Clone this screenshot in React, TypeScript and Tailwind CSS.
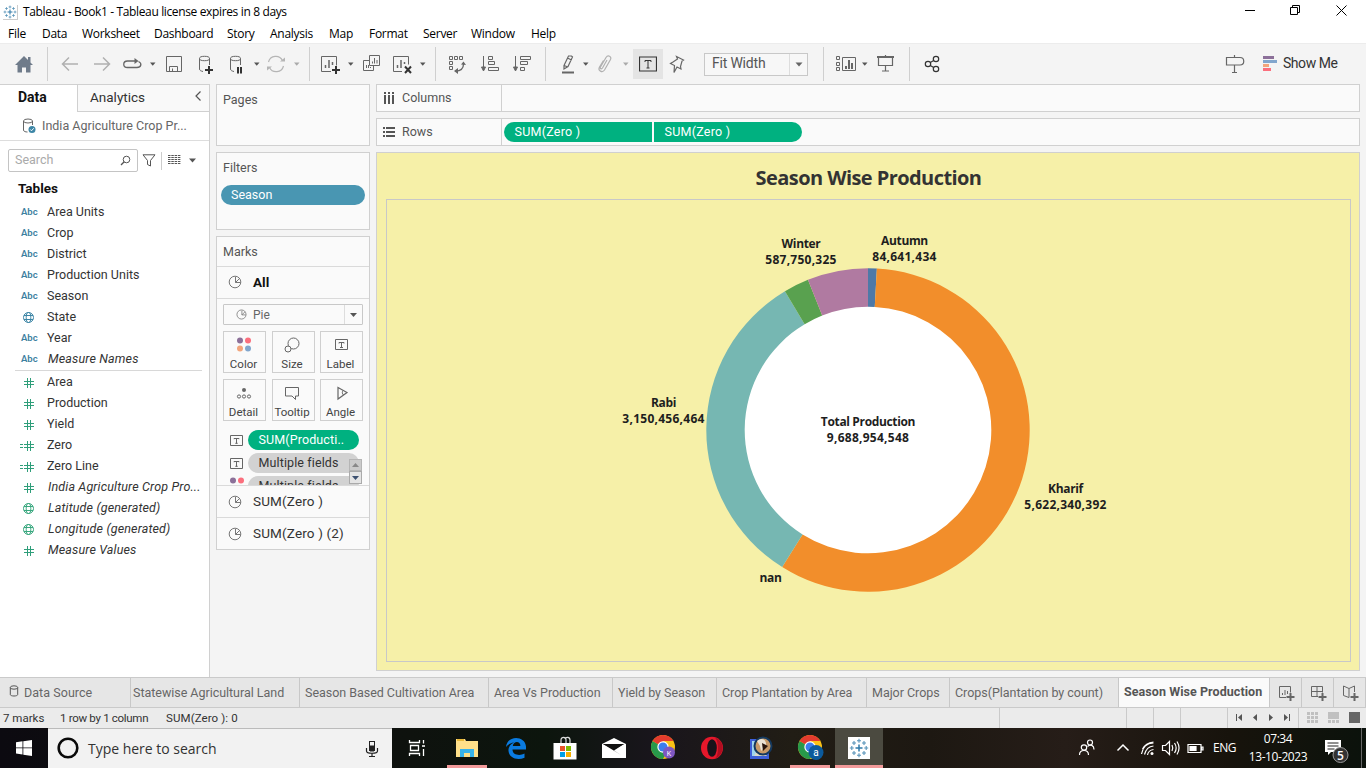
import React from "react";

type P = { children?: React.ReactNode; className?: string };

const Ic = ({ s = 24, className = "", children }: P & { s?: number }) => (
  <svg width={s} height={s} viewBox={`0 0 ${s} ${s}`} fill="none" stroke="#666" strokeWidth="1" className={"block shrink-0 " + className}>
    {children}
  </svg>
);

const Caret = ({ className = "", color = "#555" }: { className?: string; color?: string }) => (
  <svg width="8" height="6" viewBox="0 0 8 6" className={"shrink-0 " + className}>
    <path d="M2 1.500h5.500L4.750 4.700z" fill={color} />
  </svg>
);

const Sep = ({ className = "" }: P) => <div className={"h-[34px] w-px shrink-0 bg-[#cfcfcf] " + className} />;

const Plus = ({ x, y }: { x: number; y: number }) => (
  <path d={`M${x - 4} ${y}h8M${x} ${y - 4}v8`} stroke="#333" strokeWidth="2" />
);

const PieIcon = ({ s = 14 }: { s?: number }) => (
  <svg width={s} height={s} viewBox="0 0 14 14" fill="none" stroke="#777" strokeWidth="1" className="shrink-0">
    <circle cx="7" cy="7" r="5.800" />
    <path d="M7.500 2v5.500h5M7.500 7.500l4-4" />
  </svg>
);

const Globe = ({ color }: { color: string }) => (
  <svg width="13" height="13" viewBox="0 0 13 13" fill="none" stroke={color} className="shrink-0">
    <circle cx="6.500" cy="6.500" r="5" />
    <ellipse cx="6.500" cy="6.500" rx="2.300" ry="5" />
    <path d="M2 4.500h9M2 8.500h9" />
  </svg>
);

const Hash = ({ calc }: { calc?: boolean }) => (
  <svg width="20" height="12" viewBox="0 0 20 12" fill="none" stroke="#2f9e7a" className="shrink-0">
    <path d="M9.500 1v10M12.500 1v10M6 4.500h10M6 7.500h10" />
    {calc && <path d="M2 4.500h3M2 7.500h3" />}
  </svg>
);

const TBox = ({ s = 13 }: { s?: number }) => (
  <svg width={s} height={s} viewBox="0 0 13 13" fill="none" stroke="#666" className="shrink-0">
    <path d="M.5 1.500h12v10H.5zM4 5.200V4.500h5v.700M6.500 4.500v5M5.300 9.300h2.400" />
  </svg>
);

const TableauMark = ({ s = 14 }: { s?: number }) => (
  <svg width={s} height={s} viewBox="0 0 20 20" fill="none" stroke="#2e79a8" strokeWidth="1.500" className="shrink-0">
    <path d="M10 6.500v7M6.500 10h7" />
    <path d="M10 .800v4M8 2.800h4M10 15.200v4M8 17.200h4M.800 10h4M2.800 8v4M15.200 10h4M17.200 8v4M5 3v4M3 5h4M15 3v4M13 5h4M5 13v4M3 15h4M15 13v4M13 15h4" strokeWidth="1.100" stroke="#5793b8" />
  </svg>
);

const menus: [string, string][] = [
  ["File", "w-[34px]"], ["Data", "w-[40px]"], ["Worksheet", "w-[72px]"], ["Dashboard", "w-[73px]"], ["Story", "w-[43px]"],
  ["Analysis", "w-[59px]"], ["Map", "w-[40px]"], ["Format", "w-[54px]"], ["Server", "w-[48px]"], ["Window", "w-[60px]"], ["Help", "w-[30px]"],
];

const TitleBar = () => (
  <div className="flex h-6 shrink-0 items-center bg-white pl-[3px]">
    <div className="flex h-[15px] w-[15px] items-center justify-center border-r border-b border-[#ccc]"><TableauMark s={14} /></div>
    <div className="ml-[5px] font-['Open_Sans',sans-serif] text-[12px] tracking-[-0.36px] text-black">Tableau - Book1 - Tableau license expires in 8 days</div>
    <svg width="116" height="24" viewBox="0 0 116 24" fill="none" stroke="#000" className="mr-[13px] ml-auto">
      <path d="M8 10.500h10M53.500 7.500h7v7h-7zM55.500 7.500v-2h7v7h-2M99.500 5.500l10 10M109.500 5.500l-10 10" />
    </svg>
  </div>
);

const MenuBar = () => (
  <div className="flex h-[19px] shrink-0 items-center bg-white pl-2 font-['Open_Sans',sans-serif] text-[12px] tracking-[-0.28px] text-black">
    {menus.map(([t, w]) => <div key={t} className={"shrink-0 whitespace-nowrap " + w}>{t}</div>)}
  </div>
);

const Toolbar = () => (
  <div className="flex h-[41px] shrink-0 items-center border-t border-[#ececec] bg-[#f4f4f4] pl-3">
    <Ic><path d="M3 13L12 4l4 4V5h2.500v5.500L21 13h-2.500v7.500h-4.500v-5h-4v5H5.500V13z" fill="#6f7b8a" stroke="none" /></Ic>
    <Sep className="ml-[11px]" />
    <Ic className="ml-[10px]"><path d="M4 12h16M11 5.500L4.500 12l6.500 6.500" stroke="#b0b0b0" strokeWidth="1.500" /></Ic>
    <Ic className="ml-2"><path d="M4 12h16M13 5.500l6.500 6.500-6.500 6.500" stroke="#b0b0b0" strokeWidth="1.500" /></Ic>
    <Ic className="ml-1.5"><path d="M18.500 9.500c4 2 2.500 6-1.500 6H7.500c-5 0-5-6.500 0-6.500H16" strokeWidth="1.300" /><path d="M14.500 6l4 3-4 3z" fill="#666" stroke="none" /></Ic>
    <Caret className="ml-1" />
    <Ic className="ml-1.5"><path d="M4.500 4.500h15v15h-15zM7.500 19.500v-5h8v5M10.500 19v-2.500" /></Ic>
    <Ic className="ml-2"><ellipse cx="10.500" cy="6.500" rx="5" ry="2.200" /><path d="M5.500 6.500v10.500c0 1.500 1.500 2 3.500 2.500M15.500 6.500v6.500" /><Plus x={15} y={18} /></Ic>
    <Ic className="ml-[7px]"><ellipse cx="10.500" cy="6.500" rx="5" ry="2.200" /><path d="M5.500 6.500v10.500c0 1.500 1.500 2 3.500 2.500M15.500 6.500v6.500" /><path d="M13 15v6.500M16 15v6.500" stroke="#333" strokeWidth="2" /></Ic>
    <Caret className="ml-[3px]" />
    <Ic className="ml-1"><path d="M4.500 10a7.500 7.500 0 0 1 14-1.500M19.500 14a7.500 7.500 0 0 1-14 1.500" stroke="#b5b5b5" strokeWidth="1.200" /><path d="M16 9.500h5V5.500zM8 14.500H3v4z" fill="#b5b5b5" stroke="none" /></Ic>
    <Caret className="ml-1" color="#aaa" />
    <Sep className="ml-[9px]" />
    <Ic className="ml-2"><path d="M13 19.500H3.500v-15h15v9" /><path d="M7.500 16v-3M11 16V8M14.500 13v-3" strokeWidth="1.500" /><Plus x={18} y={18} /></Ic>
    <Caret className="ml-1" />
    <Ic className="ml-[5px]"><path d="M10.500 3.500h10v10h-10zM10.500 8.500h-6v10h10v-5M13.500 11.500v-2M15.500 11.500V6M18 11.500V8M7.500 16v-3M9.500 16v-3M11.500 16v-1" /></Ic>
    <Ic className="ml-2"><path d="M11 19.500H2.500v-15h15v8" /><path d="M6.500 16v-3M10 16V8M13.500 12v-2" strokeWidth="1.500" /><path d="M14 14.500l6 6.500M20 14.500l-6 6.500" stroke="#333" strokeWidth="2" /></Ic>
    <Caret className="ml-[3px]" />
    <Sep className="ml-[9px]" />
    <Ic className="ml-[9px]"><path d="M4.500 4.500h3v3h-3zM9.500 4.500h3v3h-3zM14.500 4.500h3v3h-3zM4.500 9.500h3v3h-3zM4.500 14.500h3v3h-3z" /><path d="M18.500 12c0 4-2 7-8 7" strokeWidth="1.300" /><path d="M16 12.500l2.500-3 2.500 3.500zM13 16v6l-4-3z" fill="#666" stroke="none" /></Ic>
    <Ic className="ml-[9px]"><path d="M5.500 4v14" /><path d="M3.500 15l2 4 2-4z" fill="#666" /><path d="M10.500 4.500h4v3h-4zM10.500 9.500h6v3h-6zM10.500 15.500h10v3h-10z" /></Ic>
    <Ic className="ml-2"><path d="M5.500 4v14" /><path d="M3.500 15l2 4 2-4z" fill="#666" /><path d="M10.500 4.500h10v3h-10zM10.500 9.500h7v3h-7zM10.500 15.500h4v3h-4z" /></Ic>
    <Sep className="ml-[11px]" />
    <Ic className="ml-[10px]"><path d="M8 13.500l4.500-9.500h3l1 1-4.500 9.500-4 2.500zM8 13.500l4 1.500M11.500 6l4 2" strokeWidth="1.200" /><path d="M6 20.500h12" strokeWidth="2" /></Ic>
    <Caret className="ml-px" />
    <Ic className="ml-1"><path d="M14 8l-4.500 8c-1 1.500-3 .500-2-1l5.500-9.500c2-3 6-1 4.500 2l-6 10.500c-2 3-7 1-5-3l4-6.500" stroke="#b0b0b0" strokeWidth="1.200" /></Ic>
    <Caret className="ml-1" color="#aaa" />
    <div className="ml-1 flex h-[30px] w-[30px] shrink-0 items-center justify-center bg-[#e4e4e4]">
      <Ic s={18}><path d="M.500 2h17v14H.500z" stroke="#333" strokeWidth="1.200" /><path d="M6 7V5.500h6V7M9 5.500v7.500M7.500 13h3" stroke="#333" /></Ic>
    </div>
    <Ic className="ml-0.5"><path d="M11.500 4.500l7 3.500-1.500 1-1.500 5.500.500 2.500-4-2-3 5.500.500-7-4-2 2.500-1.500L12.500 7z" strokeWidth="1.200" /></Ic>
    <div className="ml-[15px] flex h-[23px] w-[104px] shrink-0 items-center border border-[#c8c8c8] bg-[#f7f7f7]">
      <div className="w-[84px] pb-px pl-[7px] text-[14px] tracking-[-0.2px] text-[#555]">Fit Width</div>
      <div className="flex h-full flex-1 items-center justify-center border-l border-[#ddd]"><svg width="8" height="5" viewBox="0 0 8 5"><path d="M.500.500h7L4 4.500z" fill="#666" /></svg></div>
    </div>
    <Sep className="ml-[15px]" />
    <Ic className="ml-[10px]"><path d="M2.500 4.500h3v3h-3zM2.500 10.500h3v3h-3zM2.500 15.500h3v3h-3zM8.500 5.500h13v13h-13z" /><path d="M12 17v-3M15 17V8M18 17v-6" strokeWidth="2" /></Ic>
    <Caret className="ml-0.5" />
    <Ic className="ml-1.5"><path d="M3 5h17" strokeWidth="2" /><path d="M4.500 5v8.500h14V5M11.500 3v2M11.500 13.500v5.500M8 19h7" strokeWidth="1.200" /></Ic>
    <Sep className="ml-[11px]" />
    <Ic className="ml-[10px]"><g stroke="#333" strokeWidth="1.200"><circle cx="8" cy="12" r="2.700" /><circle cx="16" cy="7" r="2.700" /><circle cx="16" cy="17" r="2.700" /><path d="M10.300 10.500L13.700 8.500M10.300 13.500l3.400 2" /></g></Ic>
    <Ic className="ml-auto"><path d="M3.500 5.500h13.500c5 0 5 7.500 0 7.500H3.500zM11.500 3v2.500M11.500 13v7.500M9 20.500h5" strokeWidth="1.200" /></Ic>
    <div className="ml-4 flex h-4 w-[14px] shrink-0 flex-col gap-px">
      <div className="h-[3px] w-[11px] bg-[#8c7099]" />
      <div className="h-[3px] w-[14px] bg-[#82a6cd]" />
      <div className="h-[3px] w-[6px] bg-[#f2a57c]" />
      <div className="h-[3px] w-[8px] bg-[#fb6f7d]" />
    </div>
    <div className="mr-[25px] ml-1.5 w-[58px] shrink-0 pb-0.5 text-[14px] tracking-[-0.45px] whitespace-nowrap text-[#333]">Show Me</div>
  </div>
);

type F = { t: string; k: "abc" | "globe" | "ggreen" | "hash" | "calc"; i?: boolean };
const dims: F[] = [
  { t: "Area Units", k: "abc" }, { t: "Crop", k: "abc" }, { t: "District", k: "abc" }, { t: "Production Units", k: "abc" },
  { t: "Season", k: "abc" }, { t: "State", k: "globe" }, { t: "Year", k: "abc" }, { t: "Measure Names", k: "abc", i: true },
];
const meas: F[] = [
  { t: "Area", k: "hash" }, { t: "Production", k: "hash" }, { t: "Yield", k: "hash" }, { t: "Zero", k: "calc" }, { t: "Zero Line", k: "calc" },
  { t: "India Agriculture Crop Pro...", k: "hash", i: true }, { t: "Latitude (generated)", k: "ggreen", i: true },
  { t: "Longitude (generated)", k: "ggreen", i: true }, { t: "Measure Values", k: "hash", i: true },
];

const Field = ({ f }: { f: F }) => (
  <div className="flex h-[21px] items-center pl-[18px]">
    <div className="flex w-[29px] shrink-0 items-center">
      {f.k === "abc" && <span className="pl-[3px] text-[9.500px] font-semibold text-[#3d7f9f]">Abc</span>}
      {f.k === "globe" && <div className="pl-1"><Globe color="#3d86a6" /></div>}
      {f.k === "ggreen" && <div className="pl-1"><Globe color="#3aa87f" /></div>}
      {f.k === "hash" && <Hash />}
      {f.k === "calc" && <Hash calc />}
    </div>
    <div className={"text-[12.5px] whitespace-nowrap text-[#333] " + (f.i ? "pl-px tracking-[0.15px] italic" : "")}>{f.t}</div>
  </div>
);

const DataPane = () => (
  <div className="flex w-[210px] shrink-0 flex-col border-t border-r border-[#d0d0d0] bg-white">
    <div className="flex h-[27px] shrink-0">
      <div className="w-[77px] pt-0.5 pl-[18px] text-[14px] leading-[20px] font-bold text-[#111]">Data</div>
      <div className="flex flex-1 items-start justify-between border-b border-l border-[#d0d0d0] bg-[#f9f9f9] pt-0.5 pl-3 text-[13.5px] leading-[20px] text-[#333]">
        Analytics
        <svg width="8" height="10" viewBox="0 0 8 10" className="mt-1 mr-[7px]" fill="none" stroke="#555"><path d="M6.500.500L2 5l4.500 4.500" strokeWidth="1.200" /></svg>
      </div>
    </div>
    <div className="flex h-[29px] shrink-0 items-center border-b border-[#ddd] pl-[22px] text-[12.5px] text-[#666]">
      <svg width="14" height="16" viewBox="0 0 14 16" fill="none" stroke="#666" className="mr-1.5 shrink-0">
        <ellipse cx="6" cy="3" rx="4.500" ry="2" /><path d="M1.500 3v9c0 1.500 2 2 4 2M10.500 3v4" />
        <circle cx="10" cy="11.500" r="3.500" fill="#3d86a6" stroke="none" /><path d="M8.300 11.500l1.200 1.300 2.200-2.500" stroke="#fff" />
      </svg>
      <span className="whitespace-nowrap">India Agriculture Crop Pr...</span>
    </div>
    <div className="mt-2 flex h-[23px] shrink-0 items-center pl-2">
      <div className="flex h-[23px] w-[130px] items-center justify-between rounded-[2px] border border-[#c4c4c4] pr-[6px] pl-1.5 text-[12.5px] text-[#aaa]">
        Search
        <svg width="11" height="11" viewBox="0 0 11 11" fill="none" stroke="#555"><circle cx="6.500" cy="4.500" r="3.300" /><path d="M4.200 6.800L1 10" strokeWidth="1.300" /></svg>
      </div>
      <svg width="14" height="13" viewBox="0 0 14 13" fill="none" stroke="#555" className="ml-1"><path d="M1 .800h12L8.500 6.500v5.500l-3-1.500v-4z" /></svg>
      <div className="ml-[5px] h-[18px] w-px bg-[#ccc]" />
      <svg width="13" height="11" viewBox="0 0 13 11" className="ml-1.5" stroke="#555" strokeDasharray="2.500 .800"><path d="M0 .500h12.500M0 2.500h12.500M0 4.500h12.500M0 6.500h12.500M0 8.500h12.500" /></svg>
      <svg width="7" height="5" viewBox="0 0 7 5" className="ml-2"><path d="M0 .500h7L3.500 4.500z" fill="#555" /></svg>
    </div>
    <div className="mt-[6px] h-6 shrink-0 pl-[18px] text-[13.5px] leading-[20px] font-bold text-[#111]">Tables</div>
    <div className="flex shrink-0 flex-col">{dims.map((f) => <Field key={f.t} f={f} />)}</div>
    <div className="mr-[7px] mb-px ml-[15px] h-px shrink-0 bg-[#d8d8d8]" />
    <div className="flex shrink-0 flex-col">{meas.map((f) => <Field key={f.t} f={f} />)}</div>
  </div>
);

const MarkBtn = ({ t, children }: P & { t: string }) => (
  <div className="flex h-[42px] w-[43px] flex-col items-center justify-between border border-[#cfcfcf] bg-[#fafafa] pt-1 pr-[2px] text-[11.5px] leading-[16px] text-[#444]">
    <svg width="18" height="17" viewBox="0 0 18 17" fill="none" stroke="#666">{children}</svg>
    <span className="whitespace-nowrap">{t}</span>
  </div>
);

const Dots = () => (
  <g stroke="none">
    <circle cx="5" cy="4.500" r="3" fill="#8c7099" /><circle cx="13" cy="4.500" r="3" fill="#fb6f7d" />
    <circle cx="5" cy="12.500" r="3" fill="#f2a57c" /><circle cx="13" cy="12.500" r="3" fill="#82a6cd" />
  </g>
);

const Pill = ({ t, className = "" }: { t: string; className?: string }) => (
  <div className={"h-5 w-[111px] shrink-0 rounded-full pl-[10.5px] text-[12.5px] leading-[20px] tracking-[0.12px] whitespace-nowrap " + className}>{t}</div>
);

const Cards = () => (
  <div className="flex w-[154px] shrink-0 flex-col gap-1.5 text-[12.5px] text-[#555]">
    <div className="h-[62px] border border-[#d0d0d0] bg-[#fafafa] pt-1.5 pl-1.5 leading-[18px]">Pages</div>
    <div className="h-[78px] border border-[#d0d0d0] bg-[#fafafa] px-1 pt-1.5 leading-[18px]">
      <div className="pl-0.5">Filters</div>
      <div className="mt-2 h-5 rounded-full bg-[#4996b2] pl-[10px] leading-[20px] text-white">Season</div>
    </div>
    <div className="flex h-[314px] flex-col border border-[#d0d0d0] bg-[#fafafa]">
      <div className="h-[30px] shrink-0 border-b border-[#dadada] pt-1.5 pl-1.5 leading-[18px]">Marks</div>
      <div className="flex h-8 shrink-0 items-center border-b border-[#dadada] pb-px pl-[11px] text-[13.500px] font-bold text-[#111]"><PieIcon /><span className="ml-[11px]">All</span></div>
      <div className="mt-[5px] ml-1.5 flex h-[21px] w-[140px] shrink-0 items-center rounded-[1px] border border-[#c8c8c8]">
        <div className="flex flex-1 items-center pl-3 text-[12px] text-[#666]"><PieIcon s={11} /><span className="ml-1.5">Pie</span></div>
        <div className="flex h-full w-[18px] items-center justify-center border-l border-[#ddd]"><svg width="7" height="4" viewBox="0 0 7 4"><path d="M0 0h7L3.500 4z" fill="#555" /></svg></div>
      </div>
      <div className="mt-1.5 ml-1.5 grid w-[140px] shrink-0 grid-cols-[43px_43px_43px] justify-between gap-y-1.5">
        <MarkBtn t="Color"><Dots /></MarkBtn>
        <MarkBtn t="Size"><circle cx="10.500" cy="7.500" r="5.500" /><circle cx="5" cy="13" r="3" fill="#fafafa" /></MarkBtn>
        <MarkBtn t="Label"><path d="M3.500 3.500h12v10h-12zM7 7.500v-1h5v1M9.500 6.500v5M8 11.500h3" /></MarkBtn>
        <MarkBtn t="Detail"><circle cx="9" cy="6" r="2" fill="#666" stroke="none" /><circle cx="4" cy="12.500" r="1.600" /><circle cx="9" cy="12.500" r="1.600" /><circle cx="14" cy="12.500" r="1.600" /></MarkBtn>
        <MarkBtn t="Tooltip"><path d="M2.500 3.500h13v8.500h-3v3.500L9 12H2.500z" /></MarkBtn>
        <MarkBtn t="Angle"><path d="M6 3.500l9 5-9 6.500z" strokeWidth="1.200" /><path d="M11 6.500c-1 1.500-1 3 .500 4.500" /></MarkBtn>
      </div>
      <div className="relative mt-[9px] h-[55px] shrink-0 overflow-hidden">
        <div className="flex flex-col gap-[3px] pl-[13px]">
          <div className="flex items-center gap-[5px]"><TBox /><Pill t="SUM(Producti.." className="bg-[#00b180] text-white" /></div>
          <div className="flex items-center gap-[5px]"><TBox /><Pill t="Multiple fields" className="bg-[#d2d2d2] text-[#333]" /></div>
          <div className="flex items-center"><svg width="18" height="18" viewBox="2 1 18 18" className="shrink-0"><Dots /></svg><Pill t="Multiple fields" className="bg-[#d2d2d2] text-[#333]" /></div>
        </div>
        <div className="absolute top-[29px] right-[7px] flex w-[13px] flex-col">
          <div className="flex h-3 items-center justify-center border border-[#b5b5b5] bg-[#cbcbcb]"><svg width="7" height="4" viewBox="0 0 7 4"><path d="M0 4h7L3.500 0z" fill="#888" /></svg></div>
          <div className="flex h-[13px] items-center justify-center border border-[#aaa] bg-[#e4e4e4]"><svg width="7" height="4" viewBox="0 0 7 4"><path d="M0 0h7L3.500 4z" fill="#3c5070" /></svg></div>
        </div>
      </div>
      <div className="flex h-8 shrink-0 items-center border-t border-[#dadada] pl-[11px] text-[13.500px] tracking-[0.15px] text-[#333]"><PieIcon /><span className="ml-[11px]">SUM(Zero )</span></div>
      <div className="flex h-8 shrink-0 items-center border-t border-[#dadada] pl-[11px] text-[13.500px] tracking-[0.15px] text-[#333]"><PieIcon /><span className="ml-[11px]">SUM(Zero ) (2)</span></div>
    </div>
  </div>
);

const slices: [number, number, string][] = [
  [0, 3.14, "#4e79a7"], [3.14, 212.05, "#f28e2b"], [212.05, 329.1, "#76b7b2"], [329.1, 338.2, "#59a14f"], [338.2, 360, "#b07aa1"],
];
const pt = (a: number, r: number) => {
  const t = (a * Math.PI) / 180;
  return `${(481 + r * Math.sin(t)).toFixed(2)} ${(230 - r * Math.cos(t)).toFixed(2)}`;
};
const labels: [string, string, number, number][] = [
  ["Winter", "587,750,325", 414, 48], ["Autumn", "84,641,434", 517.5, 45], ["Rabi", "3,150,456,464", 276.5, 207],
  ["Kharif", "5,622,340,392", 678.5, 293], ["nan", "", 383.5, 382], ["Total Production", "9,688,954,548", 481, 226],
];

const Chart = () => (
  <svg width="963" height="461" viewBox="0 0 963 461" className="block">
    <circle cx="481" cy="230" r="124" fill="#fff" />
    {slices.map(([a, b, c]) => (
      <path key={c} fill={c} d={`M${pt(a, 161.7)}A161.700 161.700 0 ${b - a > 180 ? 1 : 0} 1 ${pt(b, 161.7)}L${pt(b, 123.3)}A123.300 123.300 0 ${b - a > 180 ? 1 : 0} 0 ${pt(a, 123.3)}Z`} />
    ))}
    <g fontFamily="'Open Sans', sans-serif" fontSize="12" fontWeight="700" fill="#1e1e1e" textAnchor="middle">
      {labels.map(([a, b, x, y]) => (
        <g key={a}>
          <text x={x} y={y} letterSpacing="-0.35">{a}</text>
          {b && <text x={x} y={y + 16} letterSpacing="0.26">{b}</text>}
        </g>
      ))}
    </g>
  </svg>
);

const Workspace = () => (
  <div className="flex w-[984px] shrink-0 flex-col gap-1.5 text-[12.5px] text-[#555]">
    <div className="flex h-7 border border-[#d0d0d0] bg-[#fafafa]">
      <div className="flex w-[125px] items-center border-r border-[#d0d0d0] pl-[7px]">
        <svg width="12" height="13" viewBox="0 0 12 13" stroke="#555" strokeWidth="2"><path d="M1 0v2M5 0v2M9 0v2M1 3v9M5 3v9M9 3v9" /></svg>
        <span className="ml-1.5">Columns</span>
      </div>
    </div>
    <div className="flex h-7 items-center border border-[#d0d0d0] bg-[#fafafa]">
      <div className="flex h-full w-[125px] items-center border-r border-[#d0d0d0] pl-1.5">
        <svg width="12" height="11" viewBox="0 0 12 11" stroke="#555" strokeWidth="2"><path d="M0 1h2M0 5h2M0 9h2M3 1h9M3 5h9M3 9h9" /></svg>
        <span className="ml-[7px]">Rows</span>
      </div>
      <div className="ml-0.5 h-5 w-[148px] rounded-l-full bg-[#00b180] pl-[10.5px] leading-[20px] tracking-[0.25px] text-white">SUM(Zero )</div>
      <div className="ml-0.5 h-5 w-[148px] rounded-r-full bg-[#00b180] pl-[10.5px] leading-[20px] tracking-[0.25px] text-white">SUM(Zero )</div>
    </div>
    <div className="flex h-[519px] flex-col border border-[#d0d0d0] bg-[#f6f0a8] pr-2 pl-[9px]">
      <div className="flex h-[46px] items-center justify-center pt-1 font-['Open_Sans',sans-serif] text-[20px] font-bold tracking-[-0.57px] text-[#333]">Season Wise Production</div>
      <div className="h-[463px] border border-[#c8c8c8]"><Chart /></div>
    </div>
  </div>
);

const tabs: [string, string][] = [
  ["Statewise Agricultural Land", "w-[169px] pl-[2px]"], ["Season Based Cultivation Area", "w-[189px] pl-[5px]"], ["Area Vs Production", "w-[124px] pl-[5px]"],
  ["Yield by Season", "w-[104px] pl-[5px]"], ["Crop Plantation by Area", "w-[150px] pl-[5px]"], ["Major Crops", "w-[83px] pl-[5px]"], ["Crops(Plantation by count)", "w-[169px] pl-[5px]"],
];

const SheetTabs = () => (
  <div className="flex h-[31px] shrink-0 border-t border-b border-[#cacaca] bg-[#e6e6e6] text-[12.5px] leading-[29px] tracking-[-0.03px] whitespace-nowrap text-[#666]">
    <div className="flex w-[130px] shrink-0 items-center pl-[9px]">
      <svg width="10" height="12" viewBox="0 0 10 12" fill="none" stroke="#555" className="mb-1"><ellipse cx="5" cy="2.500" rx="3.700" ry="1.700" /><path d="M1.300 2.500v7c0 2 7.400 2 7.400 0v-7" /></svg>
      <span className="ml-[5px] tracking-[0.05px]">Data Source</span>
    </div>
    {tabs.map(([t, c]) => <div key={t} className={"shrink-0 border-l border-[#c8c8c8] " + c}>{t}</div>)}
    <div className="w-[151px] shrink-0 border-l border-[#c8c8c8] bg-[#fafafa] pl-[5px] leading-[27px] font-bold tracking-[0.06px] text-[#555]">Season Wise Production</div>
    {[0, 1, 2].map((n) => (
      <div key={n} className="flex w-8 shrink-0 items-center justify-center border-l border-[#c8c8c8]">
        <svg width="18" height="18" viewBox="0 0 18 18" fill="none" stroke="#666">
          {n === 0 && <path d="M9 13.500H2.500v-11h11v6M5.500 11V9M8 11V6M10.500 10V7" />}
          {n === 1 && <path d="M9 12.500H2.500v-10h11v6M2.500 7.500h11M8 2.500v10" />}
          {n === 2 && <path d="M8 4.500L2.500 2v9.500L8 13.500zM8 4.500L13.500 2v6" />}
          <path d="M9.500 13h8M13.500 9v8" strokeWidth="2" />
        </svg>
      </div>
    ))}
    <div className="flex-1 border-l border-[#c8c8c8]" />
  </div>
);

const StatusBar = () => (
  <div className="flex h-5 shrink-0 items-center bg-[#ebebeb] pl-[3px] text-[11.5px] whitespace-nowrap text-[#333]">
    <div className="w-[57px] pt-px">7 marks</div>
    <div className="w-[106px] pt-px tracking-[-0.3px]">1 row by 1 column</div>
    <div className="w-[833px] pt-px tracking-[0.1px]">SUM(Zero ): 0</div>
    <div className="h-full w-[127px] border-l border-[#cacaca]" />
    <div className="h-full w-[27px] border-l border-[#cacaca]" />
    <div className="h-full w-[27px] border-l border-[#cacaca]" />
    <div className="h-full w-[47px] border-l border-[#cacaca]" />
    <div className="h-full w-[71px] border-l border-[#cacaca]">
      <svg width="70" height="20" viewBox="0 0 70 20" fill="#555"><path d="M8 6h1v7H8zM14 6v7L10 9.500zM29 6v7L25 9.500zM41 6v7l4-3.500zM56 6v7l4-3.500zM61 6h1v7h-1z" /></svg>
    </div>
    <div className="h-full flex-1 border-l border-[#cacaca]">
      <svg width="67" height="20" viewBox="0 0 67 20" fill="#c0c0c0">
        <path d="M8 4h3v3H8zM12 4h3v3h-3zM16 4h3v3h-3zM8 8h3v3H8zM12 8h3v3h-3zM16 8h3v3h-3zM8 12h3v3H8zM12 12h3v3h-3zM16 12h3v3h-3zM29 4h11v7H29zM29 12h3v3h-3zM33 12h3v3h-3zM37 12h3v3h-3z" />
        <path d="M50 4h11v11H50z" fill="#666" />
      </svg>
    </div>
  </div>
);

const Chrome = ({ c, t }: { c: string; t: string }) => (
  <svg width="28" height="28" viewBox="0 0 28 28">
    <circle cx="13" cy="13" r="12" fill="#fbc116" />
    <path d="M13 13L2.600 7A12 12 0 0 0 13 25l5-9z" fill="#28994a" />
    <path d="M2.600 7A12 12 0 0 1 23.400 7H13v6z" fill="#e33b2e" />
    <circle cx="13" cy="13" r="5.700" fill="#fff" /><circle cx="13" cy="13" r="4.500" fill="#3b7ded" />
    <circle cx="19" cy="18.500" r={t === "a" ? 7.5 : 6} fill={c} />
    <text x="19" y="21.500" fontSize={t === "a" ? 10 : 7} fill="#fff" textAnchor="middle" fontFamily="Roboto, sans-serif">{t}</text>
  </svg>
);

const Slot = ({ children, className = "" }: P) => <div className={"flex h-10 w-[49px] shrink-0 items-center justify-center border-b-[3px] pt-[3px] " + className}>{children}</div>;

const Taskbar = () => (
  <div className="flex h-10 shrink-0 items-center bg-[linear-gradient(90deg,#0c0a10_0%,#0e120e_30%,#0c150d_40%,#19151c_48%,#211d15_58%,#1d1812_68%,#261d18_78%,#17130c_90%,#0b120c_100%)] font-['Open_Sans',sans-serif] text-white">
    <div className="flex h-full w-12 shrink-0 items-center justify-center">
      <svg width="16" height="16" viewBox="0 0 16 16" fill="#fff"><path d="M0 2.200l6.500-.900v6.200H0zM7.300 1.200L16 0v7.500H7.300zM0 8.300h6.500v6.200L0 13.600zM7.300 8.300H16V16l-8.700-1.200z" /></svg>
    </div>
    <div className="flex h-full w-[344px] shrink-0 items-center border-t border-[#bbb] bg-[#f2f2f2] pl-2">
      <svg width="24" height="24" viewBox="0 0 24 24" fill="none" className="mb-0.5"><circle cx="12" cy="12" r="9.300" stroke="#0a0a0a" strokeWidth="2.600" /></svg>
      <span className="ml-2 text-[14px] tracking-[-0.02px] text-[#333]">Type here to search</span>
      <svg width="14" height="18" viewBox="0 0 14 18" fill="none" stroke="#222" className="mr-[13px] ml-auto"><rect x="4.500" y="1.500" width="5" height="9" /><path d="M5 6h4v5H5z" fill="#222" /><path d="M1.500 8v3c0 3 11 3 11 0V8M7 13.500v3M4 16.500h6" strokeWidth="1.200" /></svg>
    </div>
    <Slot className="border-transparent">
      <svg width="18" height="18" viewBox="0 0 18 18" fill="none" stroke="#fff"><path d="M1.500 1v2.500h10V1M1.500 17v-2.500h10V17M2.500 6.500h8v5h-8zM15.500 1v3.500M15.500 10v7M14 7h3" strokeWidth="1.300" /></svg>
    </Slot>
    <div className="ml-[6px] flex h-10 w-10 shrink-0 items-center justify-center border-b-[3px] border-[#f29a9a] pt-[3px]">
      <svg width="22" height="20" viewBox="0 0 22 20"><path d="M0 1h9l1 2h12v16H0z" fill="#ffe08a" /><path d="M1 1h7v2H1z" fill="#e8b93a" /><path d="M4 11h14v8h-4v-4H8v4H4z" fill="#38b3ea" /></svg>
    </div>
    <Slot className="ml-1 border-transparent">
      <svg width="22" height="22" viewBox="0 0 22 22"><path d="M1 10C2-2 20-2 21 9.500v3H7.500c0 6 8 6.500 12 4v4.200C12 24 4 20.500 3.500 14c-.300-4 2-7 5.500-8.500C5 6 2.500 8 1 10zM7.800 9h7.600c0-5.500-7-5-7.600 0z" fill="#0a7be0" /></svg>
    </Slot>
    <Slot className="border-transparent">
      <svg width="24" height="24" viewBox="0 0 24 24"><path d="M8 7V4c0-3.500 5-3.500 5 0v3M12 3c1-2.500 5-2 5 1v3" fill="none" stroke="#ddd" strokeWidth="1.200" /><path d="M.500 7h23v16.500H.500z" fill="#fff" /><path d="M7 10h5v5H7z" fill="#e8542a" /><path d="M13 10h5v5h-5z" fill="#7fba00" /><path d="M7 16h5v5H7z" fill="#00a0e8" /><path d="M13 16h5v5h-5z" fill="#f8b000" /></svg>
    </Slot>
    <Slot className="border-transparent">
      <svg width="24" height="20" viewBox="0 0 24 20"><path d="M0 6l12-6 12 6v14H0z" fill="#fff" /><path d="M1 6h21l-10 6.500L19 17z" fill="#111" /><path d="M1 6h21l-10 5.500z" fill="#111" /></svg>
    </Slot>
    <Slot className="border-transparent pl-0.5"><Chrome c="#7e57c2" t="K" /></Slot>
    <Slot className="border-transparent">
      <svg width="24" height="24" viewBox="0 0 24 24"><ellipse cx="12" cy="12" rx="11" ry="11.200" fill="#e5182b" /><ellipse cx="12" cy="12" rx="4.800" ry="8.700" fill="#17131a" /><path d="M15 1.500a11 11 0 0 1 0 21c4-3 4-17 0-21z" fill="#b00d20" /></svg>
    </Slot>
    <Slot className="border-transparent">
      <svg width="24" height="24" viewBox="0 0 24 24"><path d="M1 3h19v20H1z" fill="#3d5fd8" /><path d="M3 5h14v15H3z" fill="#9fd4ee" /><path d="M5 20l5-9 8 9z" fill="#d9d9c8" /><circle cx="14" cy="10" r="8.500" fill="#c79a69" stroke="#14395f" strokeWidth="2" /><path d="M8 5c4-4 10-2 9 5l-5 5-1-5z" fill="#e9e2d4" /><path d="M13 7l6 3-5 5z" fill="#26140c" /></svg>
    </Slot>
    <div className="ml-[5px] flex h-10 w-10 shrink-0 items-center justify-center border-b-[3px] border-[#f29a9a] pt-[3px] pl-0.5"><Chrome c="#0b5a9c" t="a" /></div>
    <div className="ml-[5px] flex h-10 w-12 shrink-0 items-center justify-center border-b-[3px] border-[#f29a9a] bg-[#4b4a40] pt-[3px]">
      <div className="flex h-[22px] w-[22px] items-center justify-center bg-white"><TableauMark s={20} /></div>
    </div>
    <svg width="160" height="40" viewBox="1.500 0 160 40" fill="none" stroke="#fff" strokeWidth="1.200" className="ml-auto shrink-0">
      <circle cx="14.500" cy="14.500" r="2.500" /><circle cx="8.500" cy="19.500" r="2.700" /><path d="M4 27c0-6 9-6 9 0M12 18.500c3-3 6.500-1 6.500 3" />
      <path d="M42 22.500l5.500-5.500 5.500 5.500" strokeWidth="1.500" />
      <path d="M66 26c1-6 5-11 12-11M69 26.500c1-4 4-8 9-8.500M72 27c.500-3 2.500-5 6-5.500M67 21c2-4 6-6.500 11-7" /><circle cx="76.500" cy="25.500" r="1.500" fill="#fff" stroke="none" />
      <path d="M87 17.500h3l4-4v13l-4-4h-3zM96.500 17c1 2 1 4 0 6M99 15c2 3 2 7 0 10M101.500 13.500c2.500 4 2.500 9 0 13" />
      <path d="M112.500 16.500h13v8h-13zM126 19h1.500v3H126z" /><path d="M114.500 18.500h6v4h-6z" fill="#fff" />
    </svg>
    <div className="w-[30px] shrink-0 text-[12px] tracking-[-0.5px] -ml-[24px]">ENG</div>
    <div className="w-[70px] shrink-0 text-center text-[12px] leading-[18px] tracking-[-0.43px] whitespace-nowrap"><div>07:34</div><div>13-10-2023</div></div>
    <svg width="48" height="40" viewBox="0 0 48 40" className="shrink-0">
      <path d="M12 12h16v12H18l-3 3v-3h-3z" fill="#fff" /><path d="M14.500 15h11M14.500 18h11M14.500 21h7" stroke="#222" />
      <circle cx="27.500" cy="27" r="7.500" fill="#333" stroke="#999" /><text x="27.500" y="31.500" fontSize="12" fill="#fff" fontWeight="600" textAnchor="middle">5</text>
    </svg>
    <div className="mr-1 h-full w-px shrink-0 bg-[#666]" />
  </div>
);

export default function App() {
  return (
    <div className="flex h-[768px] w-[1366px] flex-col overflow-hidden bg-[#f4f4f4] font-['Roboto',sans-serif]">
      <TitleBar />
      <MenuBar />
      <Toolbar />
      <div className="flex h-[593px] shrink-0 gap-1.5">
        <DataPane />
        <Cards />
        <Workspace />
      </div>
      <SheetTabs />
      <StatusBar />
      <Taskbar />
    </div>
  );
}
